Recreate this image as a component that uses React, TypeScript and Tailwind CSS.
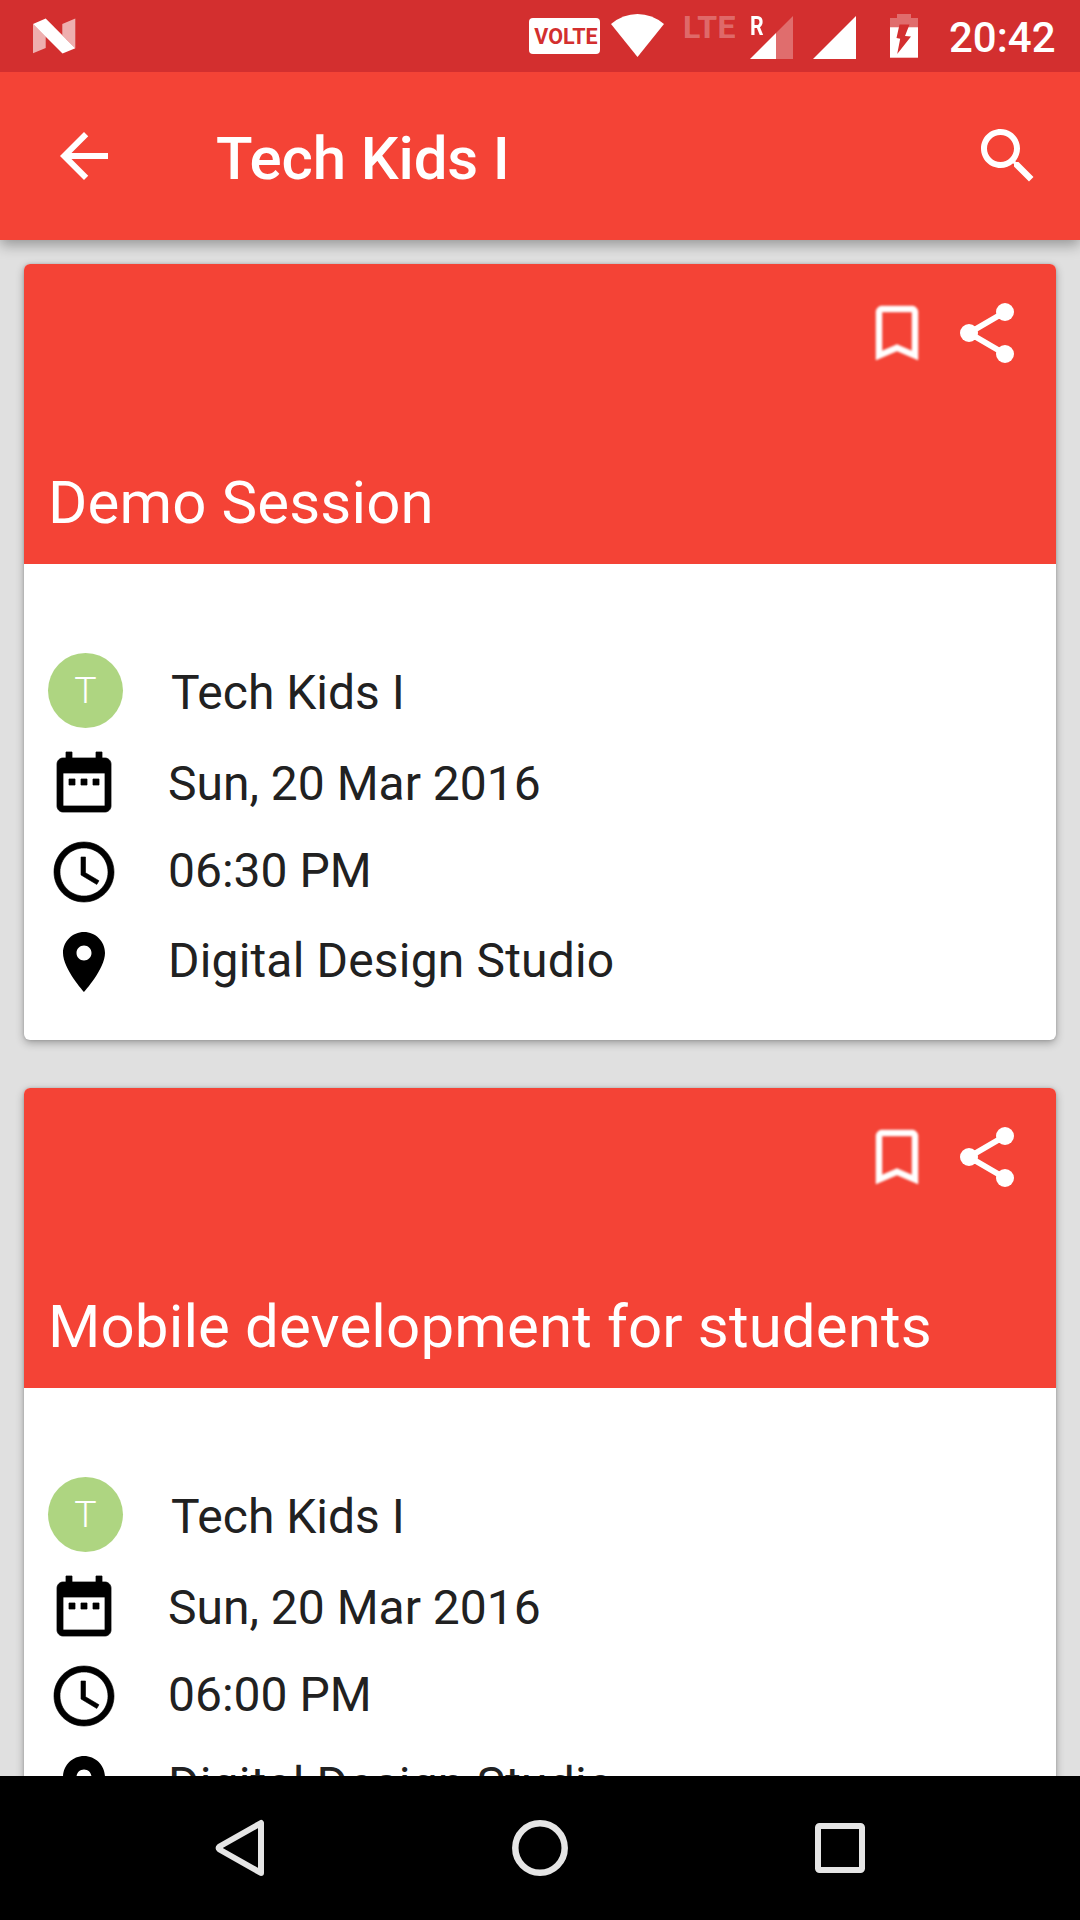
import React from "react";

type Session = { title: string; group: string; date: string; time: string; place: string };

const sessions: Session[] = [
  { title: "Demo Session", group: "Tech Kids I", date: "Sun, 20 Mar 2016", time: "06:30 PM", place: "Digital Design Studio" },
  { title: "Mobile development for students", group: "Tech Kids I", date: "Sun, 20 Mar 2016", time: "06:00 PM", place: "Digital Design Studio" },
];

const icons = {
  back: "M20 11H7.83l5.59-5.59L12 4l-8 8 8 8 1.41-1.41L7.83 13H20v-2z",
  search:
    "M15.5 14h-.79l-.28-.27C15.41 12.59 16 11.11 16 9.5 16 5.91 13.09 3 9.5 3S3 5.91 3 9.5 5.91 16 9.5 16c1.61 0 3.09-.59 4.23-1.57l.27.28v.79l5 4.99L20.49 19l-4.99-5zm-6 0C7.01 14 5 11.99 5 9.5S7.01 5 9.5 5 14 7.01 14 9.5 11.99 14 9.5 14z",
  bookmark: "M17 3H7c-1.1 0-1.99.9-1.99 2L5 21l7-3 7 3V5c0-1.1-.9-2-2-2zm0 15l-5-2.18L7 18V5h10v13z",
  date: "M9 11H7v2h2v-2zm4 0h-2v2h2v-2zm4 0h-2v2h2v-2zm2-7h-1V2h-2v2H8V2H6v2H5c-1.11 0-1.99.9-1.99 2L3 20c0 1.1.89 2 2 2h14c1.1 0 2-.9 2-2V6c0-1.1-.9-2-2-2zm0 16H5V9h14v11z",
  clock:
    "M11.99 2C6.47 2 2 6.48 2 12s4.47 10 9.99 10C17.52 22 22 17.52 22 12S17.52 2 11.99 2zM12 20c-4.42 0-8-3.58-8-8s3.58-8 8-8 8 3.58 8 8-3.58 8-8 8zM12.5 7H11v6l5.25 3.15.75-1.23-4.5-2.67z",
  place:
    "M12 2C8.13 2 5 5.13 5 9c0 5.25 7 13 7 13s7-7.75 7-13c0-3.87-3.13-7-7-7zm0 9.5c-1.38 0-2.5-1.12-2.5-2.5s1.12-2.5 2.5-2.5 2.5 1.12 2.5 2.5-1.12 2.5-2.5 2.5z",
};

function Icon({ d, className = "" }: { d: string; className?: string }) {
  return (
    <svg viewBox="0 0 24 24" className={`h-[72px] w-[72px] shrink-0 fill-current ${className}`}>
      <path d={d} />
    </svg>
  );
}

function ShareIcon() {
  return (
    <svg viewBox="0 0 24 24" className="h-[72px] w-[72px] shrink-0 fill-current">
      <path d="M18 5L6 12l12 7" className="fill-none stroke-current stroke-[1.95]" />
      <circle cx="18" cy="5" r="3" />
      <circle cx="6" cy="12" r="3" />
      <circle cx="18" cy="19" r="3" />
    </svg>
  );
}

function StatusBar() {
  return (
    <div className="z-20 flex h-[72px] shrink-0 items-start bg-[#d32f2f] text-white">
      <svg viewBox="0 0 44 36" className="mt-[18px] ml-[32px] h-[36px] w-[44px] fill-current">
        <path opacity=".62" d="M1 6v29.300l12.700-5.300V18.500zM30.300 6L43.300.500v29.800L30.300 17z" />
        <path d="M1 6L13.700.500 43.300 30.200 30.500 35.400z" />
      </svg>
      <div className="mt-[18px] ml-[453px] flex h-[36px] w-[71px] items-center justify-center rounded-[4px] bg-white pt-[2px] pl-[3px] text-[21.5px] leading-none font-bold text-[#d32f2f]">
        VOLTE
      </div>
      <svg viewBox="0 0 54 44" className="mt-[14px] ml-[11px] h-[44px] w-[54px] fill-current">
        <path d="M0 10Q12 0 26.500 0T53 10L26.500 43z" />
      </svg>
      <div className="mt-[11px] ml-[18px] w-[67px] text-[32px] leading-[32px] font-bold tracking-[0.4px] text-white/30">LTE</div>
      <div className="relative mt-[16px] h-[43px] w-[43px]">
        <svg viewBox="0 0 43 43" className="h-[43px] w-[43px] fill-current">
          <path opacity=".3" d="M26 17L43 0v43H26z" />
          <path d="M0 43L26 17v26z" />
        </svg>
        <span className="absolute -top-[2px] left-0 origin-left scale-x-[.85] text-[25px] leading-[25px] font-bold">R</span>
      </div>
      <svg viewBox="0 0 43 43" className="mt-[16px] ml-[20px] h-[43px] w-[43px] fill-current">
        <path d="M0 43L43 0v43z" />
      </svg>
      <svg viewBox="0 0 28 44" className="mt-[14px] ml-[34px] h-[44px] w-[28px] fill-current">
        <path opacity=".3" d="M7 0h14v4h7v9.200H0V4h7z" />
        <path d="M0 13.200h28v30.500H0z" />
        <path className="fill-[#d32f2f]" d="M9.500 10.500h10L15 22l6 .6L7.200 40l3-15.200L6.500 24z" />
      </svg>
      <div className="mt-[13px] ml-[31px] text-[42px] leading-[50px] font-medium">20:42</div>
    </div>
  );
}

function SessionCard({ s }: { s: Session }) {
  return (
    <article className="h-[776px] shrink-0 rounded-[6px] bg-white shadow-[0_3px_8px_rgba(0,0,0,0.3),0_0_3px_rgba(0,0,0,0.16)]">
      <header className="flex h-[300px] flex-col justify-between rounded-t-[6px] bg-[#f44336] pt-[33px] pr-[33px] pb-[26px] pl-[24px] text-white">
        <div className="flex justify-end gap-[18px]">
          <Icon d={icons.bookmark} className="stroke-current stroke-[0.15] blur-[0.8px]" />
          <ShareIcon />
        </div>
        <h2 className="text-[60px] leading-[70px] tracking-[0.13px] whitespace-nowrap">{s.title}</h2>
      </header>
      <div className="flex flex-col gap-[18px] px-[24px] pt-[89px] text-[48px] leading-[56px] text-[#212121]">
        <div className="flex items-start gap-[48px]">
          <div className="flex h-[75px] w-[75px] items-center justify-center rounded-full bg-[#aed581] text-[37.5px] leading-none font-light text-white">T</div>
          <p className="pt-[12px]">{s.group}</p>
        </div>
        <div className="flex items-start gap-[48px]">
          <Icon d={icons.date} className="stroke-current stroke-[0.25] text-black blur-[0.7px]" />
          <p className="pt-[10px]">{s.date}</p>
        </div>
        <div className="flex items-start gap-[48px]">
          <Icon d={icons.clock} className="stroke-current stroke-[0.2] text-black blur-[0.7px]" />
          <p className="pt-[7px]">{s.time}</p>
        </div>
        <div className="flex items-start gap-[48px]">
          <Icon d={icons.place} className="text-black" />
          <p className="pt-[7px] tracking-[0.17px]">{s.place}</p>
        </div>
      </div>
    </article>
  );
}

export default function App() {
  return (
    <div className="flex h-[1920px] w-[1080px] flex-col overflow-hidden bg-[#e0e0e0] font-['Roboto',sans-serif]">
      <StatusBar />
      <div className="z-10 flex h-[168px] shrink-0 items-start bg-[#f44336] pt-[48px] pr-[36px] pl-[48px] text-white shadow-[0_5px_13px_rgba(0,0,0,0.33)]">
        <Icon d={icons.back} />
        <h1 className="ml-[96px] flex-1 pt-[4px] text-[60px] leading-[70px] font-medium tracking-[-0.15px]">Tech Kids I</h1>
        <Icon d={icons.search} />
      </div>
      <main className="flex min-h-0 flex-1 flex-col gap-[48px] overflow-hidden px-[24px] pt-[24px]">
        {sessions.map((s) => (
          <SessionCard key={s.title} s={s} />
        ))}
      </main>
      <nav className="z-10 flex h-[144px] shrink-0 items-center justify-between bg-black px-[204px] text-[#e5e5e5]">
        <svg viewBox="0 0 72 72" className="h-[72px] w-[72px] fill-none stroke-current stroke-6">
          <path strokeLinejoin="round" d="M57 11v50L15.500 37.500q-1.500-1.500 0-3z" />
        </svg>
        <svg viewBox="0 0 72 72" className="h-[72px] w-[72px] fill-none stroke-current stroke-[6.5]">
          <circle cx="36" cy="36" r="24.700" />
        </svg>
        <svg viewBox="0 0 72 72" className="h-[72px] w-[72px] fill-none stroke-current stroke-6">
          <rect x="14" y="14" width="44" height="44" rx="1.500" />
        </svg>
      </nav>
    </div>
  );
}
